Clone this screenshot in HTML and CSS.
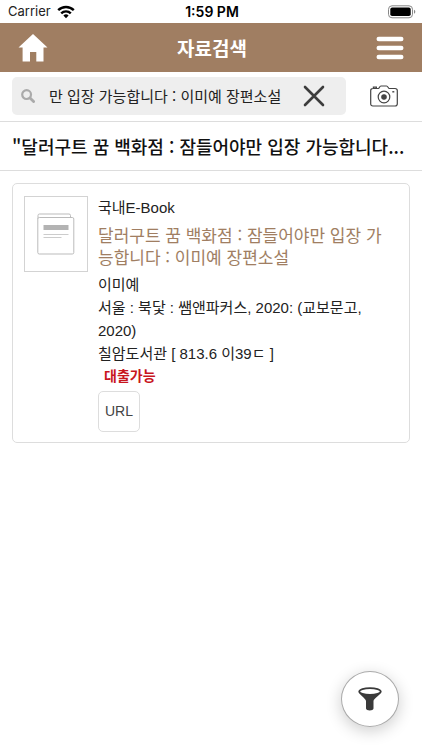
FILE: index.html
```html
<!DOCTYPE html>
<html lang="ko">
<head>
<meta charset="utf-8">
<meta name="viewport" content="width=device-width, initial-scale=1">
<title>자료검색</title>
<link rel="stylesheet" href="styles.css">
</head>
<body>
<div class="status">
  <div class="status-side">
    <span>Carrier</span>
    <svg width="18" height="14" viewBox="0 0 18 14" fill="none" stroke="#000" stroke-width="2.4" aria-hidden="true"><path d="M1.2 5.2a11 11 0 0 1 15.6 0M4.2 8.4a6.8 6.8 0 0 1 9.6 0"/><path d="M9 13.2 6.4 10.5a3.7 3.7 0 0 1 5.2 0z" fill="#000" stroke="none"/></svg>
  </div>
  <strong class="status-time">1:59 PM</strong>
  <div class="status-side status-end">
    <svg width="28" height="14" viewBox="0 0 28 14" aria-hidden="true"><rect x=".5" y=".8" width="24" height="12" rx="3.5" fill="none" stroke="#888"/><rect x="2.3" y="2.6" width="20.4" height="8.4" rx="1.8"/><path d="M26 4.8c1.8.6 1.8 3.4 0 4z" fill="#888"/></svg>
  </div>
</div>
<header class="topbar">
  <a class="icon-link" href="#" aria-label="홈">
    <svg width="30" height="28" viewBox="0 0 30 28" aria-hidden="true"><path d="M15 0 29.5 13.6H25.500V27.500H18.300V18H12V27.500H4.600V13.600H.5z" fill="#fff"/></svg>
  </a>
  <h1 class="topbar-title">자료검색</h1>
  <button class="icon-button" type="button" aria-label="메뉴">
    <svg width="28" height="24" viewBox="0 0 28 24" stroke="#fff" stroke-width="4.600" stroke-linecap="round" aria-hidden="true"><path d="M2.800 3H25.200M2.800 12H25.200M2.800 21H25.200"/></svg>
  </button>
</header>
<form class="search">
  <div class="search-box">
    <svg width="14" height="14" viewBox="0 0 14 14" fill="none" stroke="#aaa" aria-hidden="true"><circle cx="5.600" cy="5.600" r="4.400" stroke-width="2.200"/><path d="M9 9l3.600 3.600" stroke-width="2.800" stroke-linecap="round"/></svg>
    <input class="search-input" type="text" aria-label="검색어" value="만 입장 가능합니다 : 이미예 장편소설">
    <button class="icon-button" type="reset" aria-label="지우기">
      <svg width="22" height="22" viewBox="0 0 22 22" stroke="#3c3c3c" stroke-width="2.600" stroke-linecap="round" aria-hidden="true"><path d="M2 2 20 20M20 2 2 20"/></svg>
    </button>
  </div>
  <button class="icon-button" type="button" aria-label="카메라">
    <svg width="28" height="22" viewBox="0 0 28 22" fill="none" stroke="#444" stroke-width="1.200" aria-hidden="true"><path d="M3 3.500H8.500C9.300 3.500 9.500 1 11 1H16.500C18 1 18.300 3.500 19.200 3.500H25C26.400 3.500 27.300 4.300 27.300 5.600V18.800C27.300 20.200 26.500 21 25.100 21H2.900C1.500 21 .7 20.200.7 18.800V5.600C.7 4.300 1.600 3.500 3 3.500zM3.400 3.300V2.200H6.400V3.300"/><circle cx="14" cy="12" r="5.800"/><circle cx="14" cy="12" r="2.200" fill="#444"/><path d="M22.300 6.800H24.300" stroke-width="1.400"/></svg>
  </button>
</form>
<h2 class="query">"달러구트 꿈 백화점 : 잠들어야만 입장 가능합니다...</h2>
<main class="results">
  <article class="card">
    <div class="cover">
      <svg width="38" height="42" viewBox="0 0 38 42" fill="none" stroke="#bbb" aria-hidden="true"><path d="M1 6V2.500Q1 1 2.500 1H32Q33.500 1 33.500 2.500V4.500"/><rect x=".8" y="4.500" width="36" height="36.500" rx="1.500" fill="#fff"/><path d="M6.500 14.500H31.500" stroke="#b3b3b3" stroke-width="5"/><path d="M6.500 21.500H31.500M6.500 24.500H24.500" stroke="#ccc"/></svg>
    </div>
    <div class="info">
      <p class="line">국내E-Book</p>
      <h3 class="book-title"><a class="book-link" href="#">달러구트 꿈 백화점 : 잠들어야만 입장 가능합니다 : 이미예 장편소설</a></h3>
      <p class="line">이미예</p>
      <p class="line">서울 : 북닻 : 쌤앤파커스, 2020: (교보문고, 2020)</p>
      <p class="line">칠암도서관 [ 813.6 이39ㄷ ]</p>
      <p class="available">대출가능</p>
      <a class="url" href="#">URL</a>
    </div>
  </article>
</main>
<button class="filter" type="button" aria-label="필터">
  <svg width="24" height="24" viewBox="0 0 24 24" aria-hidden="true"><path d="M.5 4.500C1 7.500 8 11.500 8 14V21.500C8 24.100 15.500 24.100 15.500 21.500V14C15.500 11.500 23 7.500 23.500 4.500z" fill="#3a3a3a"/><ellipse cx="12" cy="4.500" rx="10.700" ry="3.400" fill="#fff" stroke="#3a3a3a" stroke-width="1.700"/></svg>
</button>
</body>
</html>
```
FILE: styles.css
```css
* {
  box-sizing: border-box;
}

body {
  margin: 0;
  background: #fff;
  color: #222;
  font: 15px/23px "Liberation Sans", "Noto Sans CJK KR", sans-serif;
}

h1, h2, h3, p {
  margin: 0;
}

svg {
  display: block;
  flex: none;
}

button {
  padding: 0;
  border: 0;
  background: none;
  color: inherit;
}

.status {
  display: flex;
  align-items: center;
  padding: 0 6px 0 8px;
  font: 13px/23px Inter, sans-serif;
}

.status-side {
  display: flex;
  flex: 1;
  align-items: center;
  gap: 6px;
}

.status-end {
  justify-content: flex-end;
}

.status-time {
  color: #000;
  font-weight: 600;
  font-size: 14px;
}

.topbar {
  display: flex;
  align-items: center;
  justify-content: space-between;
  padding: 10px 18px;
  background: #a07e62;
}

.topbar-title {
  color: #fff;
  font: bold 19px/29px "Noto Sans CJK KR", sans-serif;
}

.search {
  display: flex;
  align-items: center;
  gap: 24px;
  padding: 5px 24px 6px 12px;
  border-bottom: 1px solid #ddd;
}

.search-box {
  display: flex;
  flex: 1;
  align-items: center;
  min-width: 0;
  padding: 0 21px 0 9px;
  border-radius: 5px;
  background: #eee;
}

.search-input {
  flex: 1;
  min-width: 0;
  height: 38px;
  margin-left: 14px;
  padding: 0 0 2px;
  border: 0;
  outline: 0;
  background: none;
  color: #222;
  font: 15px "Noto Sans CJK KR", sans-serif;
}

.query {
  padding: 12px;
  border-bottom: 1px solid #ddd;
  color: #111;
  font: 500 18px/24px "Noto Sans CJK KR", sans-serif;
}

.results {
  padding: 12px;
}

.card {
  display: flex;
  align-items: flex-start;
  gap: 10px;
  padding: 12px 20px 10px 11px;
  border: 1px solid #ddd;
  border-radius: 5px;
}

.cover {
  display: grid;
  flex: none;
  place-items: center;
  width: 64px;
  height: 76px;
  border: 1px solid #d3d3d3;
}

.info {
  flex: 1;
  min-width: 0;
}

.book-title {
  padding: 5px 0;
  font: 17px/22px "Noto Sans CJK KR", sans-serif;
}

.book-link {
  color: #a07e62;
  text-decoration: none;
}

.available {
  padding-left: 6px;
  color: #c8161d;
  font-weight: bold;
  font-size: 14px;
}

.url {
  display: inline-block;
  margin-top: 3px;
  padding: 8px 6px;
  border: 1px solid #ddd;
  border-radius: 5px;
  color: #444;
  font: 14px/23px "Liberation Sans", sans-serif;
  text-decoration: none;
}

.filter {
  position: fixed;
  right: 23px;
  bottom: 23px;
  display: grid;
  place-items: center;
  width: 58px;
  height: 56px;
  border: 1px solid #aaa;
  border-radius: 50%;
  background: #fff;
  box-shadow: 0 4px 16px rgba(0, 0, 0, 0.2);
}
```
